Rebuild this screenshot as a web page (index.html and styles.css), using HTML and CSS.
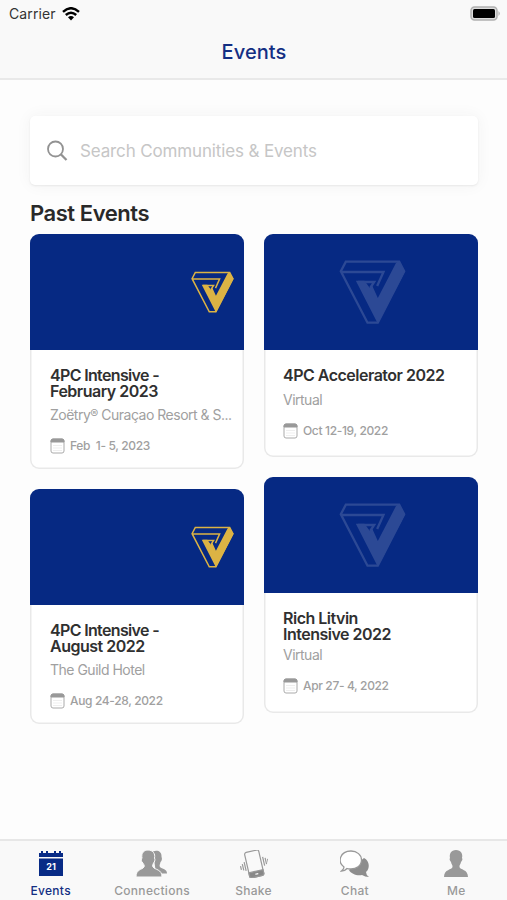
FILE: index.html
```html
<!DOCTYPE html>
<html lang="en">
<head>
    <meta charset="UTF-8">
    <title>Events</title>
    <link rel="stylesheet" href="styles.css">
</head>
<body>
    <svg class="defs" width="0" height="0">
        <symbol id="logo" viewBox="42 44 200 192">
            <path class="line" d="M62 49H222L237 78L158 232H127L47 78Z M50 80H175L156 122 M135 128L147 110H98"/>
            <path class="solid" d="M220 47L240 78L158 235L92 106H118L134 128L140 118L158 158L212 54Z"/>
        </symbol>
        <symbol id="calendar" viewBox="0 0 15 16">
            <rect x="1" y="1" width="13" height="14" rx="2" fill="#fff" stroke="#aaa"/>
            <path d="M1 4V3Q1 1 3 1H12Q14 1 14 3V4Z" fill="#999" stroke="#999"/>
            <path d="M3.5 7.5H12M3.5 10H12M3.5 12.5H12" stroke="#ddd" stroke-dasharray="1 1"/>
        </symbol>
    </svg>
    <div class="app">
        <header class="header">
            <div class="status">
                <span class="carrier">Carrier</span>
                <svg class="wifi" width="18" height="14" viewBox="0 0 18 14">
                    <path d="M1 4.8Q9-2.4 17 4.8M3.8 8Q9 3.3 14.2 8" fill="none" stroke="#000" stroke-width="2.4"/>
                    <path d="M6 10.2Q9 7.6 12 10.2L9 13.5Z"/>
                </svg>
                <svg class="battery" width="31" height="15" viewBox="0 0 31 15">
                    <rect x="1" y="1" width="26" height="13" rx="3.5" fill="#ddd" stroke="#b0b0b0" stroke-width="1.5"/>
                    <rect x="3" y="3" width="22" height="9" rx="1.5"/>
                    <path d="M28.5 5Q31 7.5 28.5 10Z" fill="#aaa"/>
                </svg>
            </div>
            <h1 class="title">Events</h1>
        </header>
        <main class="content">
            <div class="search">
                <svg width="22" height="22" viewBox="0 0 22 22" fill="none" stroke="#929292" stroke-width="1.8">
                    <circle cx="8.5" cy="9" r="7.5"/>
                    <path d="M13.8 14.3L19.5 20" stroke-width="2.3"/>
                </svg>
                <input class="search-input" type="text" placeholder="Search Communities &amp; Events">
            </div>
            <h2 class="section">Past Events</h2>
            <div class="columns">
                <div class="column">
                    <div class="card">
                        <div class="cover"><svg class="gold"><use href="#logo"/></svg></div>
                        <div class="info">
                            <h3 class="name"><span class="dash">4PC Intensive -</span><br>February 2023</h3>
                            <p class="place">Zoëtry<span class="reg">®</span> Curaçao Resort &amp; S...</p>
                            <p class="date"><svg class="cal"><use href="#calendar"/></svg>Feb&nbsp; 1- 5, 2023</p>
                        </div>
                    </div>
                    <div class="card">
                        <div class="cover"><svg class="gold"><use href="#logo"/></svg></div>
                        <div class="info">
                            <h3 class="name"><span class="dash">4PC Intensive -</span><br>August 2022</h3>
                            <p class="place">The Guild Hotel</p>
                            <p class="date"><svg class="cal"><use href="#calendar"/></svg>Aug 24-28, 2022</p>
                        </div>
                    </div>
                </div>
                <div class="column">
                    <div class="card short">
                        <div class="cover"><svg class="faded"><use href="#logo"/></svg></div>
                        <div class="info">
                            <h3 class="name">4PC Accelerator 2022</h3>
                            <p class="place">Virtual</p>
                            <p class="date"><svg class="cal"><use href="#calendar"/></svg>Oct 12-19, 2022</p>
                        </div>
                    </div>
                    <div class="card tight">
                        <div class="cover"><svg class="faded"><use href="#logo"/></svg></div>
                        <div class="info">
                            <h3 class="name">Rich Litvin<br>Intensive 2022</h3>
                            <p class="place">Virtual</p>
                            <p class="date"><svg class="cal"><use href="#calendar"/></svg>Apr 27- 4, 2022</p>
                        </div>
                    </div>
                </div>
            </div>
        </main>
        <nav class="tabs">
            <a class="tab active">
                <svg width="24" height="28" viewBox="0 0 24 28" fill="#082b86">
                    <path d="M0 3H2V1H4V3H7V1H9V3H15V1H17V3H20V1H22V3H24V7H0ZM0 8.5H24V26H0Z"/>
                    <text class="day" x="12" y="19.5" text-anchor="middle">21</text>
                </svg>
                Events
            </a>
            <a class="tab">
                <svg width="32" height="28" viewBox="0 0 32 28" fill="#999">
                    <path d="M17 1.500C22-.5 26 2 25.500 7C26.500 9 25.500 11 24.500 12C24 15 23 15 24 17C26 19 31 19 31 23.500H20Z"/>
                    <path stroke="#f9f9f9" d="M12 0C17 0 19.500 4 18.500 8C19.500 10 18.500 12 17.500 13C17 15 16 15 17 17C19 20 26 19 26 27H0C0 19 6 20 8 17C9 15 7 14 7 13C5 12 5 9 6 8C5 3 8 0 12 0Z"/>
                </svg>
                Connections
            </a>
            <a class="tab">
                <svg width="28" height="28" viewBox="0 0 28 28" fill="none" stroke="#999" stroke-width="1.2">
                    <g transform="rotate(-13 14 14)">
                        <rect x="7" y="1" width="14.500" height="26" rx="2"/>
                        <path d="M7 21.500H21.500V25Q21.500 27 19.500 27H9Q7 27 7 25Z" fill="#888"/>
                        <path d="M13 24.300H16" stroke="#fff"/>
                        <path d="M4.800 10V19M2.600 11.500V18M.4 13V17M24 9V18M26.200 10.500V17M28.400 12V16"/>
                    </g>
                </svg>
                Shake
            </a>
            <a class="tab">
                <svg width="30" height="28" viewBox="0 0 30 28" fill="#999">
                    <path d="M24 8C30 11 30 19 26 22Q26 25 29 27Q25 27 22 25C17 26 11 24 9 20Z" fill="#8d8d8d"/>
                    <path d="M11 1C17 1 21.5 5 21.5 10C21.5 16 16 19 11 19C9 19 8 19 7 18.5Q5 21 1.5 21Q4 19 4 17C-3 12 0 1 11 1Z" fill="#fff" stroke="#999" stroke-width="1.3"/>
                </svg>
                Chat
            </a>
            <a class="tab">
                <svg width="26" height="28" viewBox="0 0 26 28" fill="#999">
                    <path d="M13 0C18 0 20 4 19 8C20 9 19 11 18 12C18 14 16 15 16.5 17C17 20 25 19 25 27H1C1 19 9 20 9.5 17C10 15 8 14 8 12C7 11 6 9 7 8C6 4 8 0 13 0Z"/>
                </svg>
                Me
            </a>
        </nav>
    </div>
</body>
</html>
```
FILE: styles.css
```css
* {
    box-sizing: border-box;
}
body {
    margin: 0;
    font-family: Inter, "Liberation Sans", sans-serif;
    background-color: #fdfdfd;
}
h1, h2, h3, p {
    margin: 0;
}
.defs {
    position: absolute;
}
.app {
    display: flex;
    flex-direction: column;
    height: 900px;
}
.header {
    height: 80px;
    background-color: #f9f9f9;
    border-bottom: 2px solid #e9e9e9;
}
.status {
    display: flex;
    align-items: center;
    height: 27px;
    padding: 0 6px 0 9px;
}
.carrier {
    font-size: 14px;
    letter-spacing: 0.1px;
    color: #333;
}
.wifi {
    margin-left: 6px;
}
.battery {
    margin-left: auto;
}
.title {
    padding-left: 1px;
    font-size: 20px;
    line-height: 50px;
    font-weight: 500;
    letter-spacing: 0.1px;
    text-align: center;
    color: #142f83;
}
.content {
    flex: 1;
    padding: 36px 29px 0 30px;
}
.search {
    display: flex;
    align-items: center;
    gap: 11px;
    height: 69px;
    padding-left: 17px;
    border-radius: 5px;
    background-color: #fff;
    box-shadow: 0 1px 2px #e8e8e8, 0 0 16px #f3f3f3;
}
.search-input {
    flex: 1;
    padding: 0;
    border: 0;
    outline: none;
    font: 17px Inter, sans-serif;
    letter-spacing: -0.14px;
    background-color: transparent;
}
.search-input::placeholder {
    color: #c6c6c6;
}
.section {
    height: 49px;
    padding-top: 14px;
    font-size: 22px;
    line-height: 29px;
    font-weight: 600;
    letter-spacing: -0.45px;
    color: #292929;
}
.columns {
    display: flex;
    gap: 20px;
}
.column {
    display: flex;
    flex: 1;
    flex-direction: column;
    gap: 20px;
    min-width: 0;
}
.card {
    height: 235px;
    border-radius: 9px;
    overflow: hidden;
    background-color: #fff;
    box-shadow: inset 0 0 0 1.5px #e9e9e9;
}
.short {
    height: 223px;
}
.tight {
    height: 236px;
}
.cover {
    display: flex;
    justify-content: center;
    height: 116px;
    padding-top: 26px;
    background-color: #062983;
}
.gold {
    width: 43px;
    height: 42px;
    margin: 11px 10px 0 auto;
    color: #dcb344;
}
.faded {
    width: 67px;
    height: 64px;
    margin-left: 3px;
    color: #2c4995;
}
.line {
    fill: none;
    stroke: currentColor;
    stroke-width: 7;
}
.solid {
    fill: currentColor;
}
.info {
    padding: 17px 8px 0 20px;
}
.short .info, .tight .info {
    padding-left: 19px;
}
.name {
    font-size: 16px;
    line-height: 16px;
    font-weight: 600;
    letter-spacing: -0.5px;
    color: #303030;
}
.dash {
    letter-spacing: -0.65px;
}
.place {
    margin-top: 6px;
    font-size: 14px;
    line-height: 20px;
    letter-spacing: -0.5px;
    white-space: nowrap;
    color: #a0a0a0;
}
.reg {
    font-size: 12px;
    vertical-align: 2px;
    line-height: 1;
}
.short .place {
    margin-top: 7px;
}
.tight .place {
    margin-top: 3px;
}
.date {
    display: flex;
    align-items: center;
    gap: 5px;
    margin-top: 12px;
    font-size: 12px;
    line-height: 18px;
    font-weight: 500;
    letter-spacing: -0.35px;
    color: #a0a0a0;
}
.cal {
    width: 15px;
    height: 16px;
}
.tabs {
    display: flex;
    height: 61px;
    border-top: 2px solid #e7e7e7;
    background-color: #f9f9f9;
}
.tab {
    display: flex;
    flex: 1;
    flex-direction: column;
    align-items: center;
    gap: 5px;
    padding-top: 9px;
    font-size: 12px;
    line-height: 15px;
    font-weight: 500;
    letter-spacing: 0.3px;
    color: #999;
}
.active {
    color: #142f83;
}
.day {
    font-size: 9px;
    font-weight: 700;
    letter-spacing: 0;
    fill: #fff;
}
```
